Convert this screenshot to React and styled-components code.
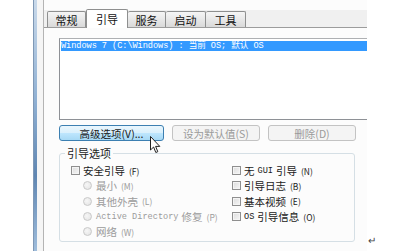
import React from 'react';
import styled, { createGlobalStyle } from 'styled-components';

const GlobalStyle = createGlobalStyle`
  html, body {
    margin: 0;
    padding: 0;
    background: #ffffff;
  }
  body {
    font-family: 'Noto Sans CJK SC', 'Noto Sans', sans-serif;
    font-size: 11px;
    color: #1e1e1e;
  }
`;

const Page = styled.div`
  position: relative;
  display: flex;
  width: 394px;
  height: 251px;
  padding-left: 33px;
  box-sizing: border-box;
  overflow: hidden;
`;

const Frame = styled.div`
  display: flex;
  width: 334px;
  height: 100%;
`;

const LeftEdge = styled.div`
  width: 4px;
  background: linear-gradient(to bottom, #c9d9ea 0%, #8fb0d3 40%, #5f86b2 70%, #9fbddc 100%);
  box-shadow: inset 1px 0 0 #7f98b5;
`;

const Gutter = styled.div`
  width: 6px;
  background: #f5f5f5;
  border-right: 1px solid #b4b4b4;
`;

const Panel = styled.div`
  flex: 1;
  display: flex;
  flex-direction: column;
  overflow: hidden;
  background: #fcfcfc;
`;

const TabStrip = styled.div`
  display: flex;
  align-items: flex-end;
  height: 19px;
  margin-top: 8px;
  padding-left: 3px;
  background: linear-gradient(to bottom, transparent 2px, #f0f0f0 2px);
  border-bottom: 1px solid #9c9c9c;
`;

const Tab = styled.div`
  display: flex;
  align-items: center;
  justify-content: center;
  box-sizing: border-box;
  width: ${p => p.$w}px;
  height: ${p => (p.$active ? 19 : 16)}px;
  margin-bottom: ${p => (p.$active ? -1 : 0)}px;
  border: 1px solid #8e8f8f;
  border-bottom: none;
  border-left: ${p => (p.$first || p.$active ? '1px solid #8e8f8f' : 'none')};
  border-radius: 2px 2px 0 0;
  background: ${p =>
    p.$active ? '#ffffff' : 'linear-gradient(to bottom, #f5f5f5 0%, #e6e6e6 55%, #d9d9d9 100%)'};
  font-size: 11px;
  color: #111;
  position: relative;
  z-index: ${p => (p.$active ? 1 : 0)};
  padding-top: ${p => (p.$active ? 0 : 1)}px;
`;

const Body = styled.div`
  padding: 10px 0 0 15px;
`;

const List = styled.div`
  width: 330px;
  height: 82px;
  box-sizing: border-box;
  border: 1px solid #8e9196;
  border-top-color: #aeb0b3;
  background: #ffffff;
  padding: 2px 1px;
`;

const ListRow = styled.div`
  height: 10px;
  line-height: 10px;
  background: ${p => (p.$selected ? '#3399ff' : 'transparent')};
  color: ${p => (p.$selected ? '#ffffff' : '#000')};
  font-family: 'Liberation Mono', 'Noto Sans CJK SC', monospace;
  font-size: 8.6px;
  white-space: nowrap;
  letter-spacing: -0.05px;
`;

const ButtonRow = styled.div`
  display: flex;
  gap: 8px;
  margin-top: 5px;
`;

const Button = styled.div`
  display: flex;
  align-items: center;
  justify-content: center;
  box-sizing: border-box;
  width: ${p => p.$w}px;
  height: 16px;
  border-radius: 3px;
  border: 1px solid ${p => (p.$hover ? '#3c7fb1' : '#c3c3c3')};
  background: ${p =>
    p.$hover
      ? 'linear-gradient(to bottom, #eaf6fd 0%, #d9f0fc 50%, #bee6fd 51%, #a7d9f5 100%)'
      : '#f4f4f4'};
  color: ${p => (p.$disabled ? '#9a9a9a' : '#1a1a1a')};
  font-size: 10.5px;
  white-space: nowrap;
`;

const Group = styled.div`
  width: 296px;
  height: 89px;
  box-sizing: border-box;
  margin-top: 12px;
  border: 1px solid #d5dfe5;
  border-radius: 3px;
`;

const GroupTitle = styled.div`
  width: fit-content;
  margin: -8px 0 0 5px;
  padding: 0 2px;
  background: #fcfcfc;
  font-size: 11px;
  line-height: 14px;
  color: #1a1a1a;
`;

const Columns = styled.div`
  display: grid;
  grid-template-columns: 161px 1fr;
  padding: 3px 0 0 11px;
`;

const Column = styled.div`
  display: flex;
  flex-direction: column;
`;

const Option = styled.div`
  display: flex;
  align-items: center;
  height: 15.3px;
  padding-left: ${p => (p.$indent ? 12 : 0)}px;
  gap: 3px;
  font-size: 10.5px;
  color: ${p => (p.$disabled ? '#9b9b9b' : '#1a1a1a')};
  white-space: nowrap;
`;

const Check = styled.span`
  width: 9px;
  height: 9px;
  box-sizing: border-box;
  border: 1px solid #8f8f8f;
  background: linear-gradient(135deg, #dcdcdc 0%, #f6f6f6 100%);
  box-shadow: inset 0 0 0 1px #f4f4f4;
  flex: none;
`;

const Radio = styled.span`
  width: 9px;
  height: 9px;
  box-sizing: border-box;
  border-radius: 50%;
  border: 1px solid #c9c9c9;
  background: radial-gradient(circle at 40% 40%, #f6f6f6 0%, #e2e2e2 100%);
  flex: none;
  margin-right: 1px;
`;

const Mono = styled.span`
  font-family: 'Liberation Mono', monospace;
  font-size: 8.6px;
`;

const Key = styled.span`
  font-size: 8.5px;
  margin-left: 1px;
`;

const Trailing = styled.div`
  align-self: flex-end;
  margin: 0 0 6px 1px;
  font-size: 10px;
  color: #444;
  line-height: 10px;
`;

const Cursor = styled.svg`
  position: absolute;
  left: 150px;
  top: 136px;
`;

const tabs = [
  { label: '常规', w: 39 },
  { label: '引导', w: 42, active: true },
  { label: '服务', w: 38 },
  { label: '启动', w: 40 },
  { label: '工具', w: 40 },
];

const App = () => (
  <>
    <GlobalStyle />
    <Page>
      <Frame>
        <LeftEdge />
        <Gutter />
        <Panel>
          <TabStrip>
            {tabs.map((t, i) => (
              <Tab key={t.label} $w={t.w} $active={t.active} $first={i === 0}>
                {t.label}
              </Tab>
            ))}
          </TabStrip>
          <Body>
            <List>
              <ListRow $selected>Windows 7 (C:\Windows) : 当前 OS; 默认 OS</ListRow>
            </List>
            <ButtonRow>
              <Button $w={105} $hover>高级选项(V)...</Button>
              <Button $w={88} $disabled>设为默认值(S)</Button>
              <Button $w={88} $disabled>删除(D)</Button>
            </ButtonRow>
            <Group>
              <GroupTitle>引导选项</GroupTitle>
              <Columns>
                <Column>
                  <Option><Check />安全引导<Key>(F)</Key></Option>
                  <Option $indent $disabled><Radio />最小<Key>(M)</Key></Option>
                  <Option $indent $disabled><Radio />其他外壳<Key>(L)</Key></Option>
                  <Option $indent $disabled><Radio /><Mono>Active Directory</Mono> 修复<Key>(P)</Key></Option>
                  <Option $indent $disabled><Radio />网络<Key>(W)</Key></Option>
                </Column>
                <Column>
                  <Option><Check />无 <Mono>GUI</Mono> 引导<Key>(N)</Key></Option>
                  <Option><Check />引导日志<Key>(B)</Key></Option>
                  <Option><Check />基本视频<Key>(E)</Key></Option>
                  <Option><Check /><Mono>OS</Mono> 引导信息<Key>(O)</Key></Option>
                </Column>
              </Columns>
            </Group>
          </Body>
        </Panel>
      </Frame>
      <Trailing>↵</Trailing>
      <Cursor width="11" height="18" viewBox="0 0 11 18">
        <path
          d="M0.5 0.5 L0.5 14 L3.6 11 L5.8 16.5 L7.8 15.7 L5.6 10.4 L9.8 10.4 Z"
          fill="#ffffff"
          stroke="#222"
          strokeWidth="1"
          strokeLinejoin="round"
        />
      </Cursor>
    </Page>
  </>
);

export default App;
